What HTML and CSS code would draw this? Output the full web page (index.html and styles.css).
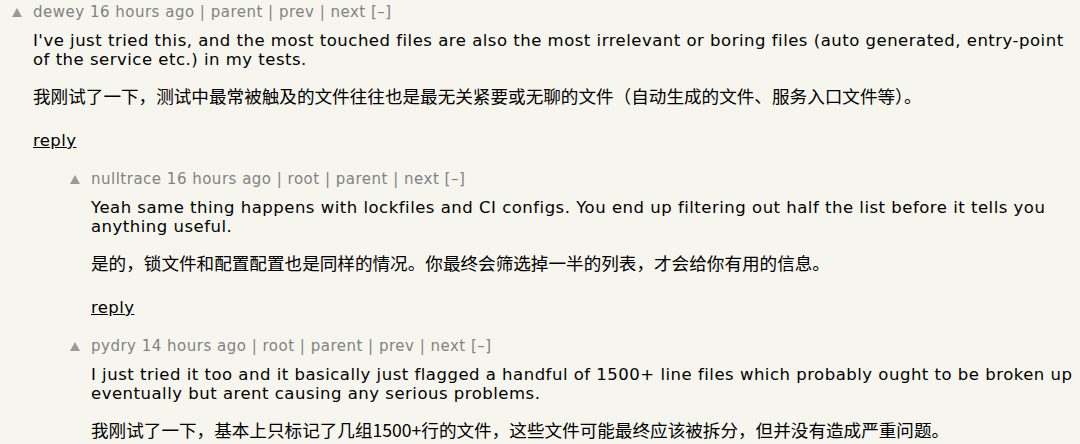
FILE: index.html
```html
<!DOCTYPE html>
<html>
<head>
<meta charset="utf-8">
<link rel="stylesheet" href="styles.css">
</head>
<body>
<div class="thread">
  <div class="comment">
    <div class="vote"><span class="arrow"></span></div>
    <div class="content">
      <div class="head">dewey 16 hours ago | parent | prev | next [–]</div>
      <p class="text">I've just tried this, and the most touched files are also the most irrelevant or boring files (auto generated, entry-point of the service etc.) in my tests.</p>
      <p class="zh">我刚试了一下，测试中最常被触及的文件往往也是最无关紧要或无聊的文件（自动生成的文件、服务入口文件等）。</p>
      <div class="reply"><a>reply</a></div>
    </div>
  </div>
  <div class="comment nested">
    <div class="vote"><span class="arrow"></span></div>
    <div class="content">
      <div class="head">nulltrace 16 hours ago | root | parent | next [–]</div>
      <p class="text">Yeah same thing happens with lockfiles and CI configs. You end up filtering out half the list before it tells you anything useful.</p>
      <p class="zh">是的，锁文件和配置配置也是同样的情况。你最终会筛选掉一半的列表，才会给你有用的信息。</p>
      <div class="reply"><a>reply</a></div>
    </div>
  </div>
  <div class="comment nested">
    <div class="vote"><span class="arrow"></span></div>
    <div class="content">
      <div class="head">pydry 14 hours ago | root | parent | prev | next [–]</div>
      <p class="text">I just tried it too and it basically just flagged a handful of 1500+ line files which probably ought to be broken up eventually but arent causing any serious problems.</p>
      <p class="zh">我刚试了一下，基本上只标记了几组1500+行的文件，这些文件可能最终应该被拆分，但并没有造成严重问题。</p>
    </div>
  </div>
</div>
</body>
</html>
```
FILE: styles.css
```css
html, body {
  margin: 0;
  padding: 0;
  background: #f6f6ef;
}
body {
  font-family: "DejaVu Sans", Verdana, sans-serif;
  color: #000;
  overflow: hidden;
}
.thread {
  display: flex;
  flex-direction: column;
  gap: 16px;
}
.comment {
  display: flex;
}
.comment.nested {
  padding-left: 58px;
}
.vote {
  width: 33px;
  flex: none;
  display: flex;
  justify-content: flex-start;
  padding-left: 12px;
  box-sizing: border-box;
  padding-top: 8px;
}
.arrow {
  width: 0;
  height: 0;
  border-left: 5px solid transparent;
  border-right: 5px solid transparent;
  border-bottom: 9px solid #9a9a9a;
}
.content {
  flex: 1;
  min-width: 0;
}
.head {
  font-size: 15px;
  letter-spacing: 0.5px;
  line-height: 24px;
  color: #828282;
}
.text {
  margin: 7px 0 0;
  font-size: 16.5px;
  letter-spacing: 0.5px;
  line-height: 19px;
}
.zh {
  margin: 16px 0 0;
  font-family: "Noto Sans CJK SC", "DejaVu Sans", sans-serif;
  font-size: 17.6px;
  line-height: 22px;
}
.reply {
  margin-top: 24px;
  font-size: 16.5px;
  letter-spacing: 0.4px;
  line-height: 20px;
}
.reply a {
  color: #000;
  text-decoration: underline;
}
```
